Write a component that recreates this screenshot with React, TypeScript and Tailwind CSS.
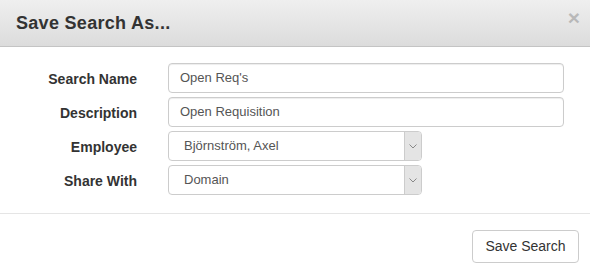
import React from 'react';

const fields = [
    { label: 'Search Name', value: "Open Req's", kind: 'input' },
    { label: 'Description', value: 'Open Requisition', kind: 'input' },
    { label: 'Employee', value: 'Björnström, Axel', kind: 'select' },
    { label: 'Share With', value: 'Domain', kind: 'select' },
];

const Chevron: React.FC = () => (
    <svg width="8" height="5" viewBox="0 0 8 5" fill="none" stroke="#888" strokeWidth="1">
        <path d="M0.5 0.5 L4 4 L7.5 0.5" />
    </svg>
);

const App: React.FC = () => {
    return (
        <div className="w-[590px] h-[276px] bg-white font-['Liberation_Sans',Arial,sans-serif] text-[#333]">
            <div className="h-[47px] flex items-center justify-between pl-4 pr-[10px] bg-gradient-to-b from-[#efefef] to-[#dcdcdc] border-b border-[#c4c4c4]">
                <h2 className="text-[18px] font-bold tracking-[0.3px] text-[#333] pt-[1px]">Save Search As...</h2>
                <span className="text-[21px] font-bold leading-none text-black opacity-20 -mt-[12px]">×</span>
            </div>
            <div className="pt-4 pb-[18px] border-b border-[#e5e5e5] flex flex-col gap-[4px]">
                {fields.map((f) => (
                    <div key={f.label} className="flex items-center h-[30px]">
                        <label className="w-[137px] text-right text-[14px] font-bold pt-[3px]">{f.label}</label>
                        {f.kind === 'input' ? (
                            <div className="ml-[31px] w-[396px] h-[30px] flex items-center px-[11px] border border-[#ccc] rounded-[4px] shadow-[inset_0_1px_1px_rgba(0,0,0,0.075)] text-[13px] text-[#555]">
                                {f.value}
                            </div>
                        ) : (
                            <div className="ml-[31px] w-[254px] h-[30px] flex border border-[#ccc] rounded-[4px] overflow-hidden text-[13px] text-[#555]">
                                <div className="flex-1 flex items-center pl-[15px]">{f.value}</div>
                                <div className="w-[17px] flex items-center justify-center bg-[#e4e4e4] border-l border-[#ccc]">
                                    <Chevron />
                                </div>
                            </div>
                        )}
                    </div>
                ))}
            </div>
            <div className="flex justify-end pt-[16px] pr-[11px]">
                <button className="w-[107px] h-[33px] border border-[#ccc] rounded-[4px] bg-white text-[14px] text-[#333]">
                    Save Search
                </button>
            </div>
        </div>
    );
};

export default App;
